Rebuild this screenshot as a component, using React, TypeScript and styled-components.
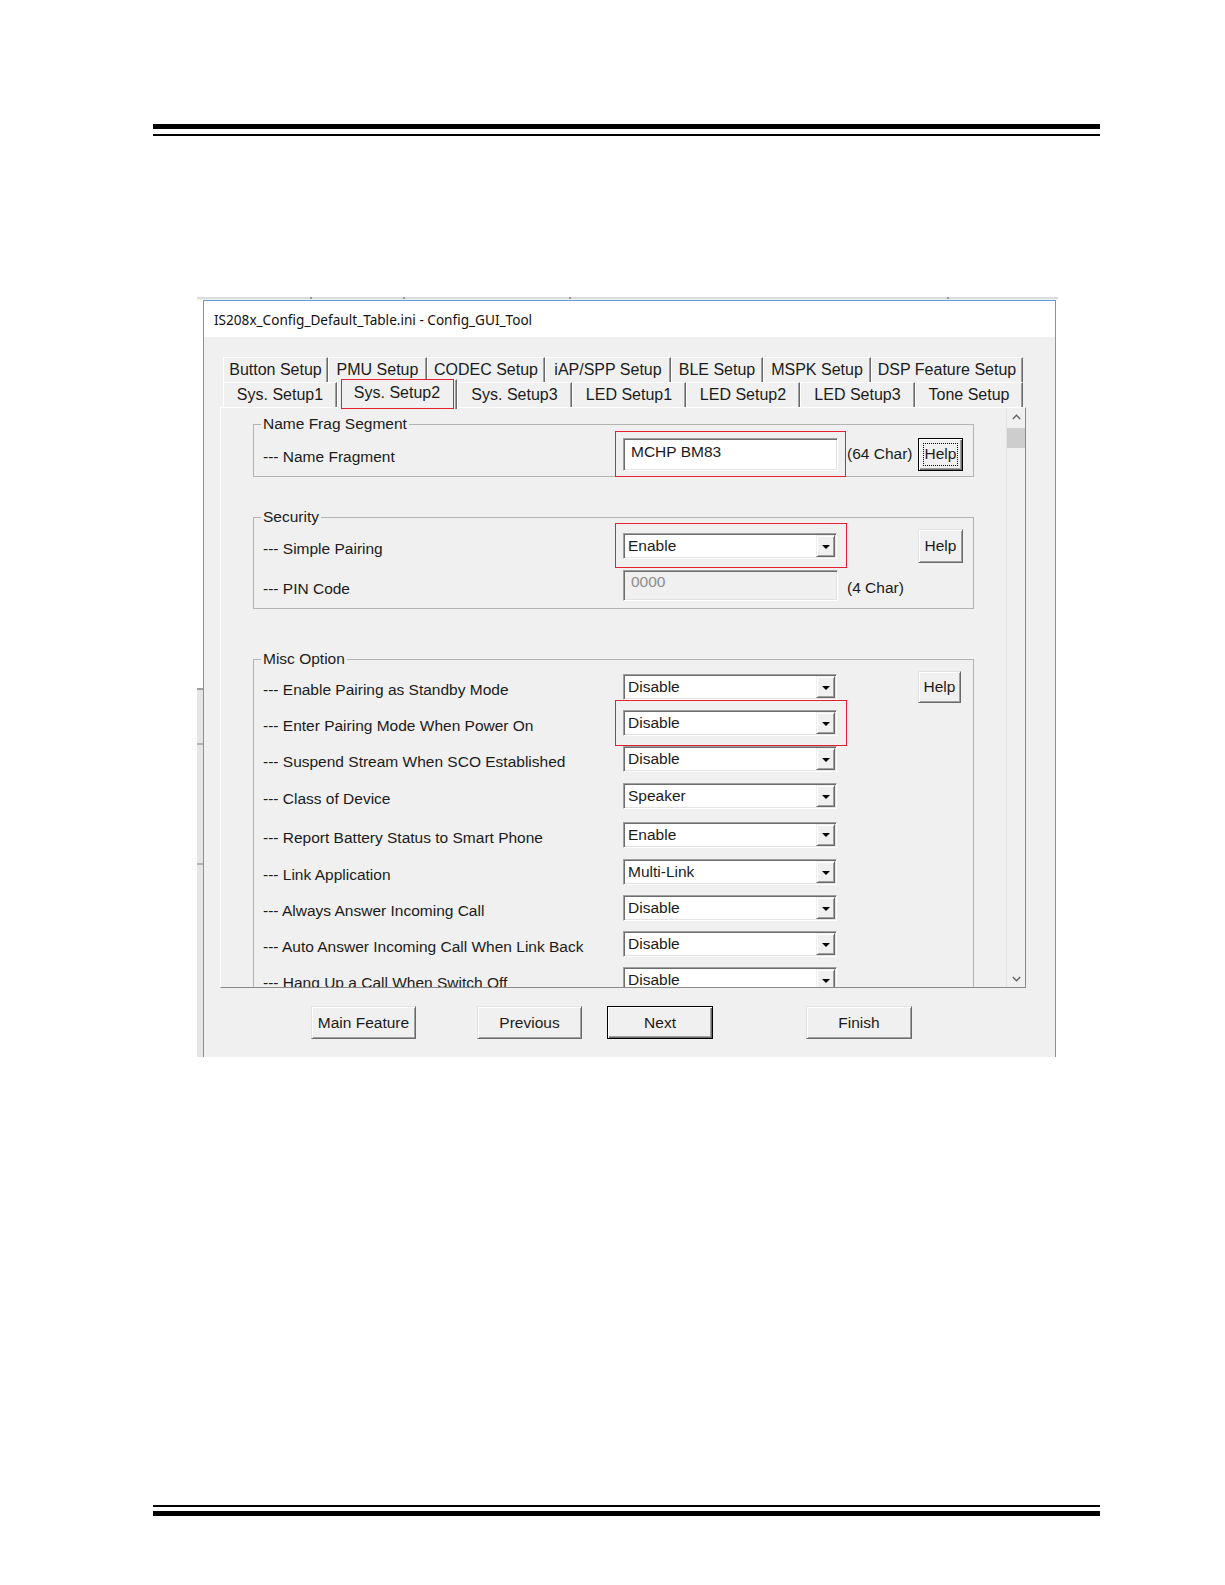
import React from "react";
import styled, { createGlobalStyle } from "styled-components";

const GlobalStyle = createGlobalStyle`
  html, body { margin: 0; padding: 0; background: #ffffff; }
  body { font-family: "Liberation Sans", Arial, sans-serif; color: #1b1b1b; }
  *, *::before, *::after { box-sizing: border-box; }
`;

const Page = styled.div`
  width: 1225px;
  height: 1585px;
  overflow: hidden;
  background: #fff;
  display: flex;
  flex-direction: column;
`;

const Rules = styled.div<{ $mt: number; $reverse?: boolean }>`
  margin: ${(p) => p.$mt}px 0 0 153px;
  width: 947px;
  flex-shrink: 0;
  display: flex;
  flex-direction: ${(p) => (p.$reverse ? "column-reverse" : "column")};
  gap: ${(p) => (p.$reverse ? 4 : 5)}px;
`;

const Rule = styled.div<{ $h: number }>`
  height: ${(p) => p.$h}px;
  background: #000;
`;

const Figure = styled.div`
  margin: 160px 0 0 197px;
  width: 861px;
  height: 761px;
  flex-shrink: 0;
  display: flex;
  flex-direction: column;
  overflow: hidden;
`;

const BackEdge = styled.div`
  height: 4px;
  flex-shrink: 0;
  background:
    linear-gradient(#9a9a9a, #9a9a9a) 113px 1px / 2px 2px no-repeat,
    linear-gradient(#9a9a9a, #9a9a9a) 206px 1px / 2px 2px no-repeat,
    linear-gradient(#9a9a9a, #9a9a9a) 372px 1px / 2px 2px no-repeat,
    linear-gradient(#9a9a9a, #9a9a9a) 750px 1px / 2px 2px no-repeat,
    linear-gradient(to bottom, #ffffff 0 1px, #dcdcdc 1px 3px, #f2f2f2 3px);
`;

const FigureBody = styled.div`
  display: flex;
  flex: 1;
  min-height: 0;
`;

const BackSide = styled.div`
  width: 6px;
  flex-shrink: 0;
  background: linear-gradient(
    to bottom,
    #ffffff 0 388px,
    #9e9e9e 388px 390px,
    #e6e6e6 390px 443px,
    #b0b0b0 443px 445px,
    #e6e6e6 445px 563px,
    #b0b0b0 563px 565px,
    #e6e6e6 565px
  );
`;

const Window = styled.div`
  width: 853px;
  flex-shrink: 0;
  border: 1px solid #5c9ad8;
  border-bottom: none;
  background: #f0f0f0;
  display: flex;
  flex-direction: column;
`;

const TitleBar = styled.div`
  height: 36px;
  flex-shrink: 0;
  background: #fff;
  display: flex;
  align-items: center;
  padding-left: 10px;
  font-family: "Noto Sans", "Open Sans", sans-serif;
  font-size: 13.6px;
  color: #111;
  white-space: nowrap;
`;

const Body = styled.div`
  flex: 1;
  padding: 20px 0 0 16px;
  display: flex;
  flex-direction: column;
`;

const TabControl = styled.div`
  width: 806px;
  display: flex;
  flex-direction: column;
`;

const TabRow = styled.div`
  height: 25px;
  display: flex;
  align-items: flex-start;
  padding-left: 3px;
`;

const Tab = styled.div<{ $w: number; $selected?: boolean }>`
  position: relative;
  width: ${(p) => p.$w}px;
  height: ${(p) => (p.$selected ? 30 : 25)}px;
  margin-top: ${(p) => (p.$selected ? -3 : 0)}px;
  z-index: ${(p) => (p.$selected ? 1 : 0)};
  display: flex;
  align-items: ${(p) => (p.$selected ? "flex-start" : "center")};
  padding-top: ${(p) => (p.$selected ? 3 : 0)}px;
  justify-content: center;
  background: #f0f0f0;
  border-top: 1px solid #ffffff;
  border-left: 1px solid #ffffff;
  border-right: 1px solid #696969;
  box-shadow: inset -1px 0 0 #a0a0a0;
  font-size: 16px;
  line-height: 20px;
  color: #1b1b1b;
  white-space: nowrap;
`;

const Mark = styled.span<{ $t: number; $r: number; $b: number; $l: number }>`
  position: absolute;
  top: ${(p) => -p.$t}px;
  right: ${(p) => -p.$r}px;
  bottom: ${(p) => -p.$b}px;
  left: ${(p) => -p.$l}px;
  border: 1.5px solid #e3202f;
  pointer-events: none;
`;

const Panel = styled.div`
  height: 581px;
  display: flex;
  background: #f0f0f0;
  border: 1px solid;
  border-color: #ffffff #8a8a8a #8a8a8a #ffffff;
`;

const Content = styled.div`
  flex: 1;
  overflow: hidden;
  padding: 7px 0 0 32px;
`;

const ScrollBar = styled.div`
  width: 19px;
  flex-shrink: 0;
  display: flex;
  flex-direction: column;
  border-left: 1px solid #e2e2e2;
  background: #f0f0f0;
`;

const ScrollArrow = styled.div`
  height: 17px;
  display: flex;
  align-items: center;
  justify-content: center;
`;

const ScrollThumb = styled.div`
  height: 20px;
  margin-top: 3px;
  background: #cdcdcd;
`;

const ScrollTrack = styled.div`
  flex: 1;
`;

const Group = styled.fieldset<{ $mt: number; $pt: number; $pb: number }>`
  margin: ${(p) => p.$mt}px 0 0 0;
  width: 721px;
  min-width: 0;
  padding: ${(p) => p.$pt}px 10px ${(p) => p.$pb}px 9px;
  border: 1px solid #b4b4b4;
`;

const Legend = styled.legend`
  padding: 0 2px;
  margin-left: -2px;
  font-size: 15.5px;
  line-height: 18px;
  color: #1b1b1b;
`;

const Row = styled.div<{ $h: number }>`
  height: ${(p) => p.$h}px;
  display: grid;
  grid-template-columns: 360px 215px 80px 45px;
  align-items: center;
`;

const Label = styled.div`
  padding-top: 6px;
  font-size: 15.5px;
  line-height: 18px;
  white-space: nowrap;
`;

const Cell = styled.div`
  position: relative;
`;

const Note = styled.div<{ $dy?: number }>`
  padding-left: 9px;
  padding-top: ${(p) => p.$dy ?? 0}px;
  font-size: 15.5px;
  line-height: 18px;
  white-space: nowrap;
`;

const Field = styled.div<{ $h: number; $pt: number; $disabled?: boolean }>`
  width: 215px;
  height: ${(p) => p.$h}px;
  background: ${(p) => (p.$disabled ? "#f0f0f0" : "#ffffff")};
  border: 1px solid;
  border-color: #a0a0a0 #ffffff #ffffff #a0a0a0;
  box-shadow: inset 1px 1px 0 #6d6d6d, inset -1px -1px 0 #e3e3e3;
  padding: ${(p) => p.$pt}px 7px 0 7px;
  font-size: 15.5px;
  line-height: 18px;
  color: ${(p) => (p.$disabled ? "#8c8c8c" : "#1b1b1b")};
`;

const Select = styled.div`
  width: 214px;
  height: 26px;
  display: flex;
  background: #ffffff;
  border: 1px solid;
  border-color: #a0a0a0 #ffffff #ffffff #a0a0a0;
  box-shadow: inset 1px 1px 0 #6d6d6d, inset -1px -1px 0 #e3e3e3;
  padding: 1px;
`;

const SelectText = styled.span`
  flex: 1;
  padding-left: 3px;
  font-size: 15.5px;
  line-height: 22px;
  color: #1b1b1b;
  white-space: nowrap;
`;

const DropButton = styled.span`
  width: 19px;
  display: flex;
  align-items: center;
  justify-content: center;
  background: #f0f0f0;
  border: 1px solid;
  border-color: #f0f0f0 #696969 #696969 #f0f0f0;
  box-shadow: inset 1px 1px 0 #ffffff, inset -1px -1px 0 #a0a0a0;
`;

const DropTriangle = styled.span`
  width: 0;
  height: 0;
  margin-top: 1px;
  border-left: 4px solid transparent;
  border-right: 4px solid transparent;
  border-top: 4px solid #000;
`;

const WinButton = styled.button<{ $w: number; $h: number; $ml?: number; $default?: boolean }>`
  position: relative;
  width: ${(p) => p.$w}px;
  height: ${(p) => p.$h}px;
  margin-left: ${(p) => p.$ml ?? 0}px;
  padding: 0;
  background: #f0f0f0;
  font-family: "Liberation Sans", Arial, sans-serif;
  font-size: 15.5px;
  color: #1b1b1b;
  border: 1px solid;
  border-color: ${(p) =>
    p.$default ? "#000 #000 #000 #000" : "#e3e3e3 #696969 #696969 #e3e3e3"};
  box-shadow: ${(p) =>
    p.$default
      ? "inset 1px 1px 0 #ffffff, inset -1px -1px 0 #696969, inset -2px -2px 0 #a0a0a0"
      : "inset 1px 1px 0 #ffffff, inset -1px -1px 0 #a0a0a0"};
`;

const FocusRing = styled.span`
  position: absolute;
  top: 4px;
  left: 4px;
  right: 4px;
  bottom: 4px;
  border: 1px dotted #000;
  pointer-events: none;
`;

const ButtonBar = styled.div`
  margin-top: 18px;
  height: 33px;
  display: flex;
  padding-left: 91px;
`;

const Chevron = ({ up }: { up?: boolean }) => (
  <svg width="9" height="6" viewBox="0 0 9 6">
    <polyline
      points={up ? "0.8,5 4.5,1.2 8.2,5" : "0.8,1 4.5,4.8 8.2,1"}
      fill="none"
      stroke="#606060"
      strokeWidth="1.3"
    />
  </svg>
);

type TabDef = { label: string; w: number; selected?: boolean };

const row1: TabDef[] = [
  { label: "Button Setup", w: 105 },
  { label: "PMU Setup", w: 99 },
  { label: "CODEC Setup", w: 118 },
  { label: "iAP/SPP Setup", w: 126 },
  { label: "BLE Setup", w: 92 },
  { label: "MSPK Setup", w: 108 },
  { label: "DSP Feature Setup", w: 152 },
];

const row2: TabDef[] = [
  { label: "Sys. Setup1", w: 114 },
  { label: "Sys. Setup2", w: 120, selected: true },
  { label: "Sys. Setup3", w: 115 },
  { label: "LED Setup1", w: 114 },
  { label: "LED Setup2", w: 114 },
  { label: "LED Setup3", w: 115 },
  { label: "Tone Setup", w: 108 },
];

type MiscDef = { label: string; value: string; h: number; help?: boolean; mark?: boolean };

const misc: MiscDef[] = [
  { label: "--- Enable Pairing as Standby Mode", value: "Disable", h: 36, help: true },
  { label: "--- Enter Pairing Mode When Power On", value: "Disable", h: 36, mark: true },
  { label: "--- Suspend Stream When SCO Established", value: "Disable", h: 36 },
  { label: "--- Class of Device", value: "Speaker", h: 38 },
  { label: "--- Report Battery Status to Smart Phone", value: "Enable", h: 39 },
  { label: "--- Link Application", value: "Multi-Link", h: 36 },
  { label: "--- Always Answer Incoming Call", value: "Disable", h: 36 },
  { label: "--- Auto Answer Incoming Call When Link Back", value: "Disable", h: 36 },
  { label: "--- Hang Up a Call When Switch Off", value: "Disable", h: 36 },
];

const Dropdown = ({ value }: { value: string }) => (
  <Select>
    <SelectText>{value}</SelectText>
    <DropButton>
      <DropTriangle />
    </DropButton>
  </Select>
);

export default function App() {
  return (
    <Page>
      <GlobalStyle />
      <Rules $mt={124}>
        <Rule $h={5} />
        <Rule $h={2} />
      </Rules>

      <Figure>
        <BackEdge />
        <FigureBody>
          <BackSide />
          <Window>
            <TitleBar>IS208x_Config_Default_Table.ini - Config_GUI_Tool</TitleBar>
            <Body>
              <TabControl>
                <TabRow>
                  {row1.map((t) => (
                    <Tab key={t.label} $w={t.w}>
                      {t.label}
                    </Tab>
                  ))}
                </TabRow>
                <TabRow>
                  {row2.map((t) => (
                    <Tab key={t.label} $w={t.w} $selected={t.selected}>
                      {t.label}
                      {t.selected && <Mark $t={1} $r={-2} $b={0} $l={-3} />}
                    </Tab>
                  ))}
                </TabRow>
                <Panel>
                  <Content>
                    <Group $mt={0} $pt={4} $pb={5}>
                      <Legend>Name Frag Segment</Legend>
                      <Row $h={34}>
                        <Label>--- Name Fragment</Label>
                        <Cell>
                          <Field $h={33} $pt={4}>MCHP BM83</Field>
                          <Mark $t={7} $r={8} $b={6} $l={8} />
                        </Cell>
                        <Note>(64 Char)</Note>
                        <WinButton $w={45} $h={33} $default>
                          Help
                          <FocusRing />
                        </WinButton>
                      </Row>
                    </Group>

                    <Group $mt={31} $pt={1} $pb={2}>
                      <Legend>Security</Legend>
                      <Row $h={38}>
                        <Label>--- Simple Pairing</Label>
                        <Cell>
                          <Dropdown value="Enable" />
                          <Mark $t={10} $r={9} $b={9} $l={8} />
                        </Cell>
                        <Note />
                        <WinButton $w={45} $h={34}>
                          Help
                        </WinButton>
                      </Row>
                      <Row $h={41}>
                        <Label>--- PIN Code</Label>
                        <Cell>
                          <Field $h={31} $pt={2} $disabled>
                            0000
                          </Field>
                        </Cell>
                        <Note $dy={4}>(4 Char)</Note>
                        <span />
                      </Row>
                    </Group>

                    <Group $mt={41} $pt={1} $pb={0}>
                      <Legend>Misc Option</Legend>
                      {misc.map((m) => (
                        <Row key={m.label} $h={m.h}>
                          <Label>{m.label}</Label>
                          <Cell>
                            <Dropdown value={m.value} />
                            {m.mark && <Mark $t={10} $r={9} $b={10} $l={8} />}
                          </Cell>
                          <Note />
                          {m.help ? (
                            <WinButton $w={43} $h={32}>
                              Help
                            </WinButton>
                          ) : (
                            <span />
                          )}
                        </Row>
                      ))}
                    </Group>
                  </Content>
                  <ScrollBar>
                    <ScrollArrow>
                      <Chevron up />
                    </ScrollArrow>
                    <ScrollThumb />
                    <ScrollTrack />
                    <ScrollArrow>
                      <Chevron />
                    </ScrollArrow>
                  </ScrollBar>
                </Panel>
              </TabControl>
              <ButtonBar>
                <WinButton $w={105} $h={33}>
                  Main Feature
                </WinButton>
                <WinButton $w={105} $h={33} $ml={61}>
                  Previous
                </WinButton>
                <WinButton $w={106} $h={33} $ml={25} $default>
                  Next
                </WinButton>
                <WinButton $w={106} $h={33} $ml={93}>
                  Finish
                </WinButton>
              </ButtonBar>
            </Body>
          </Window>
        </FigureBody>
      </Figure>

      <Rules $mt={448} $reverse>
        <Rule $h={5} />
        <Rule $h={2} />
      </Rules>
    </Page>
  );
}
